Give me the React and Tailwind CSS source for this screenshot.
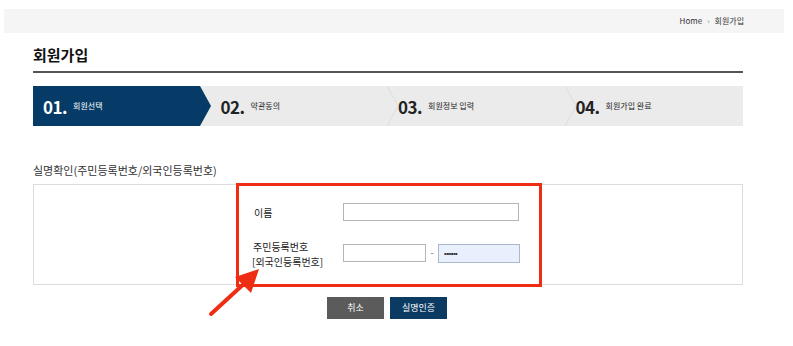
// App.jsx — 회원가입 01 회원선택 · 실명확인 화면
const FONT = { fontFamily: '"Noto Sans CJK KR", "Noto Sans", sans-serif' };

const STEPS = [
  { no: "01.", label: "회원선택" },
  { no: "02.", label: "약관동의" },
  { no: "03.", label: "회원정보 입력" },
  { no: "04.", label: "회원가입 완료" },
];

function StepBar() {
  return (
    <div className="relative ml-[33px] w-[710px] h-[40px] bg-[#ebebeb] flex">
      {STEPS.map((s, i) => (
        <div key={s.no} className={`relative flex-1 flex items-center pl-[10px] ${i === 0 ? "text-white" : "text-[#222]"}`}>
          {i === 0 && (
            <svg className="absolute left-0 top-0" width="179" height="40" viewBox="0 0 179 40">
              <path d="M0 0 H167 L178 20 L167 40 H0 Z" fill="#053b66" />
            </svg>
          )}
          {i > 0 && i < 3 && (
            <svg className="absolute right-[-11px] top-0 z-10" width="12" height="40" viewBox="0 0 12 40">
              <path d="M0 0 L11 20 L0 40" fill="none" stroke="#dcdcdc" strokeWidth="1" />
            </svg>
          )}
          <span className="relative text-[17px] font-bold tracking-[-0.5px] leading-none">{s.no}</span>
          <span className="relative ml-[6px] text-[8px] leading-none">{s.label}</span>
        </div>
      ))}
    </div>
  );
}

function Annotation() {
  return (
    <>
      <div className="absolute left-[236px] top-[183px] w-[306px] h-[104px] border-[3px] border-[#ee2d12] pointer-events-none" />
      <svg className="absolute left-[205px] top-[262px]" width="64" height="60" viewBox="0 0 64 60">
        <line x1="6" y1="52" x2="42" y2="19" stroke="#ee2d12" strokeWidth="4" strokeLinecap="round" />
        <path d="M54 7 L30 15 L46 31 Z" fill="#ee2d12" />
      </svg>
    </>
  );
}

export default function App() {
  return (
    <div className="relative w-[793px] h-[346px] bg-white overflow-hidden text-[#333]" style={FONT}>
      {/* breadcrumb */}
      <div className="mt-[9px] ml-[4px] w-[780px] h-[24px] bg-[#f5f5f5] flex items-center justify-end pr-[40px] text-[8px] text-[#333]">
        <span>Home</span>
        <span className="mx-[5px] text-[#888]">›</span>
        <span>회원가입</span>
      </div>

      {/* title */}
      <div className="ml-[33px] w-[710px] mt-[12px] pb-[6px] border-b-2 border-[#555]">
        <h1 className="text-[15px] font-bold text-[#111] leading-[20px]">회원가입</h1>
      </div>

      <div className="mt-[13px]">
        <StepBar />
      </div>

      <div className="ml-[33px] mt-[36px] text-[11px] text-[#333] leading-[16px]">실명확인(주민등록번호/외국인등록번호)</div>

      {/* form box */}
      <div className="ml-[33px] w-[710px] mt-[6px] h-[101px] border border-[#dcdcdc] pl-[218px] pt-[18px]">
        <div className="flex items-center h-[18px]">
          <span className="w-[91px] pl-[2px] text-[10px] text-[#222]">이름</span>
          <input className="w-[176px] h-[18px] border border-[#b5b5b5] bg-white outline-none" />
        </div>
        <div className="flex items-center mt-[18px]">
          <div className="w-[91px] text-[10px] leading-[15px] text-[#222]">
            <div className="pl-[1px]">주민등록번호</div>
            <div>[외국인등록번호]</div>
          </div>
          <input className="w-[83px] h-[18px] border border-[#b5b5b5] bg-white outline-none -mt-[2px]" />
          <span className="w-[12px] text-center text-[9px] text-[#666] -mt-[2px]">-</span>
          <div className="w-[82px] h-[19px] border border-[#a9b8cc] bg-[#e8f0fe] flex items-center pl-[5px] -mt-[2px]">
            <span className="text-[7px] leading-none tracking-[-0.5px] text-[#222]">•••••••</span>
          </div>
        </div>
      </div>

      {/* buttons */}
      <div className="mt-[12px] flex justify-center gap-[6px] pr-[19px]">
        <button className="w-[57px] h-[22px] bg-[#5b5b5b] text-white text-[9px]">취소</button>
        <button className="w-[57px] h-[22px] bg-[#0b3a63] text-white text-[9px]">실명인증</button>
      </div>

      <Annotation />
    </div>
  );
}
